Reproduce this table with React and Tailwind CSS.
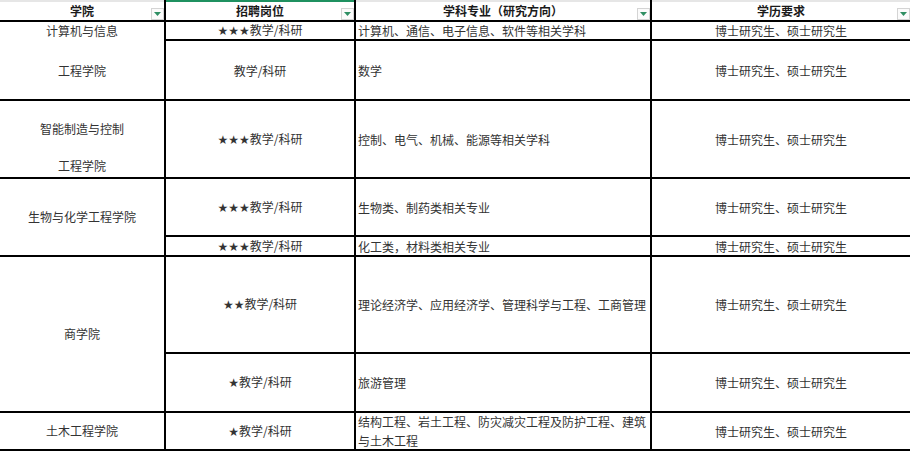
import React from "react";

const font = { fontFamily: '"Noto Sans CJK SC", "Noto Sans", sans-serif' };

function Stars({ n }) {
  if (!n) return null;
  return (
    <span className="font-['DejaVu_Sans',sans-serif] text-[12px]">
      {"★".repeat(n)}
    </span>
  );
}

function Drop() {
  return (
    <div className="absolute right-0 bottom-0 w-[13px] h-[12px] border border-[#d4d4d4] bg-[#fbfbfb] flex items-center justify-center">
      <svg width="7" height="4" viewBox="0 0 7 4">
        <polygon points="0,0 7,0 3.5,4" fill="#2f8f63" />
      </svg>
    </div>
  );
}

function Head({ children, green }) {
  return (
    <div
      className={
        "relative bg-white flex items-center justify-center text-[12px] font-bold text-[#1a1a1a] border-t-2 [grid-row:1/2] " +
        (green ? "border-[#1f9160]" : "border-[#e6e6e6]")
      }
    >
      <span className="leading-[16px]">{children}</span>
      <Drop />
    </div>
  );
}

const rows = [
  { s: 3, m: "计算机、通信、电子信息、软件等相关学科" },
  { s: 0, m: "数学" },
  { s: 3, m: "控制、电气、机械、能源等相关学科" },
  { s: 3, m: "生物类、制药类相关专业" },
  { s: 3, m: "化工类，材料类相关专业" },
  { s: 2, m: "理论经济学、应用经济学、管理科学与工程、工商管理" },
  { s: 1, m: "旅游管理" },
  { s: 1, m: "结构工程、岩土工程、防灾减灾工程及防护工程、建筑与土木工程" },
];

const rowPos = [
  "[grid-row:2/3]",
  "[grid-row:3/4]",
  "[grid-row:4/5]",
  "[grid-row:5/6]",
  "[grid-row:6/7]",
  "[grid-row:7/8]",
  "[grid-row:8/9]",
  "[grid-row:9/10]",
];

export default function App() {
  return (
    <div className="w-[910px] h-[451px] bg-white overflow-hidden" style={font}>
      <div className="grid grid-cols-[164px_188px_294px_258px] grid-rows-[20px_17px_58px_76px_56px_18px_95px_57px_36px] gap-[2px] bg-black pb-[2px] text-[12px] text-[#333]">
        <Head>学院</Head>
        <Head green>招聘岗位</Head>
        <Head>学科专业（研究方向）</Head>
        <Head>学历要求</Head>

        {/* column 1 */}
        <div className="[grid-column:1/2] [grid-row:2/4] bg-white flex flex-col items-center">
          <div className="h-[17px] flex items-center leading-[17px]">计算机与信息</div>
          <div className="h-[58px] mt-[2px] flex items-center leading-[17px]">工程学院</div>
        </div>
        <div className="[grid-column:1/2] [grid-row:4/5] bg-white flex flex-col items-center pt-[19px] gap-[19px] leading-[18px]">
          <div>智能制造与控制</div>
          <div>工程学院</div>
        </div>
        <div className="[grid-column:1/2] [grid-row:5/7] bg-white flex items-center justify-center">
          生物与化学工程学院
        </div>
        <div className="[grid-column:1/2] [grid-row:7/9] bg-white flex items-center justify-center">
          商学院
        </div>
        <div className="[grid-column:1/2] [grid-row:9/10] bg-white flex items-center justify-center">
          土木工程学院
        </div>

        {rows.map((r, i) => (
          <React.Fragment key={i}>
            <div className={"[grid-column:2/3] bg-white flex items-center justify-center leading-[17px] " + rowPos[i]}>
              <span>
                <Stars n={r.s} />
                教学/科研
              </span>
            </div>
            <div className={"[grid-column:3/4] bg-white flex items-center px-[2px] leading-[19px] " + rowPos[i]}>
              {r.m}
            </div>
            <div className={"[grid-column:4/5] bg-white flex items-center justify-center leading-[17px] " + rowPos[i]}>
              博士研究生、硕士研究生
            </div>
          </React.Fragment>
        ))}
      </div>
    </div>
  );
}
